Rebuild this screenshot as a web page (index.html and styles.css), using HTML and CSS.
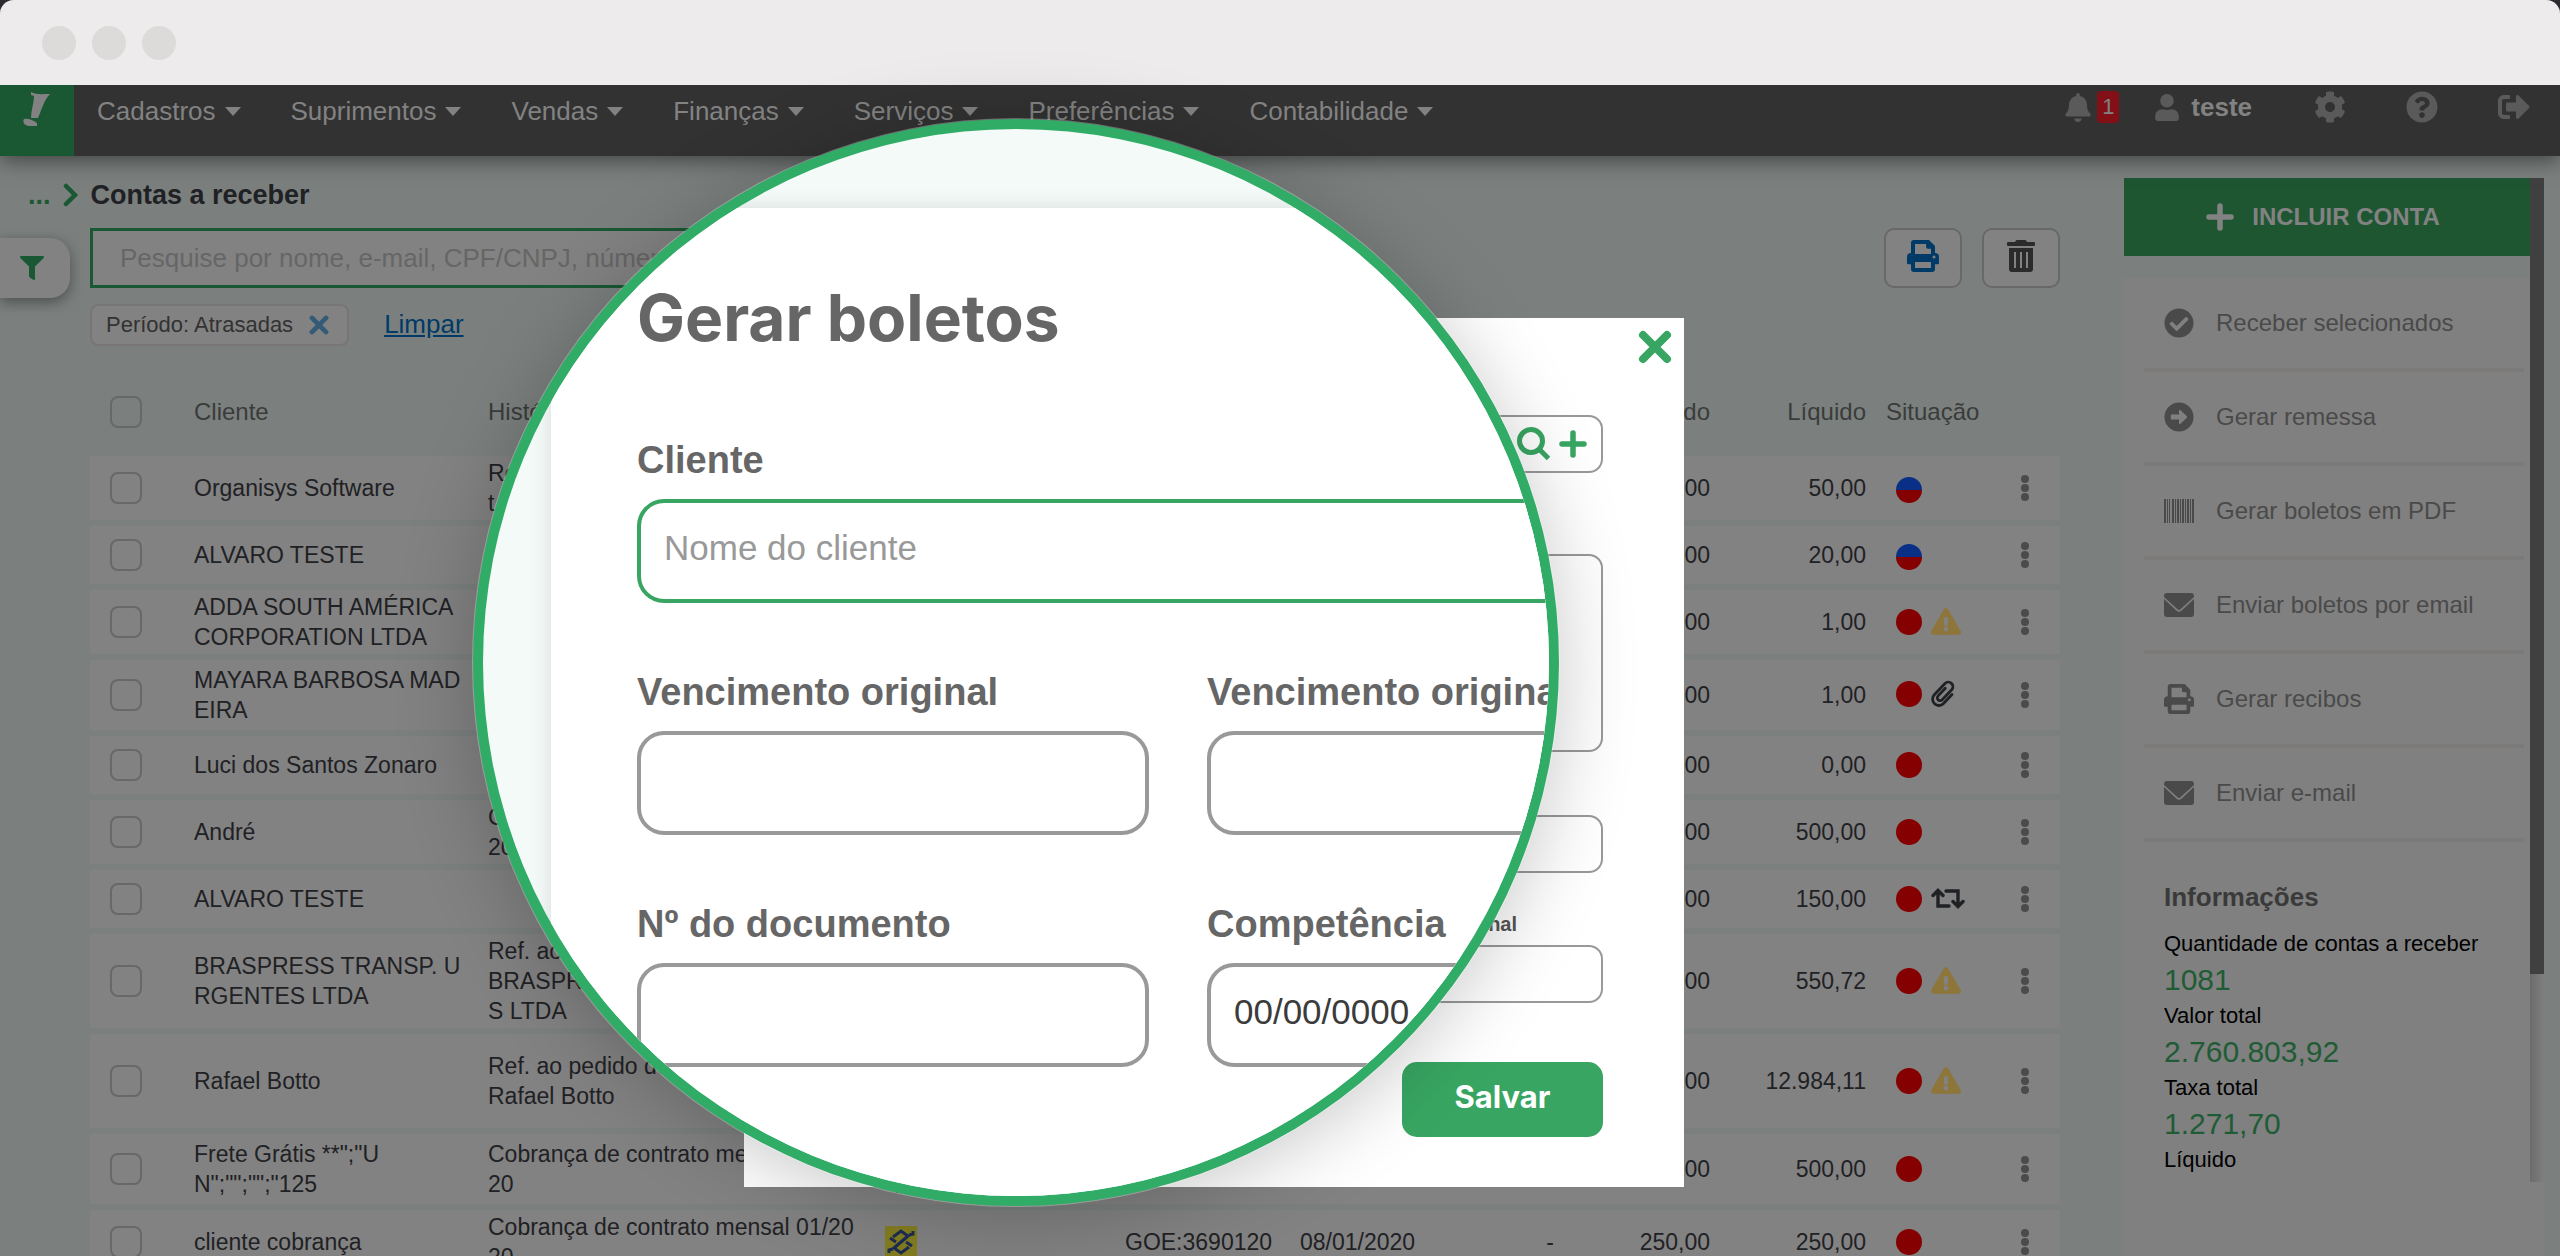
FILE: index.html
```html
<!DOCTYPE html>
<html lang="pt-BR">
<head>
<meta charset="utf-8">
<title>Contas a receber</title>
<link rel="stylesheet" href="styles.css">
</head>
<body>
<svg class="sprite" aria-hidden="true">
  <symbol id="i-filter" viewBox="0 0 512 512"><path d="M488 0H24C2.700 0-8 25.900 7 41l185 185v206c0 7.800 3.800 15.200 10.200 19.700l80 56C298 518.700 320 507.500 320 488V226L505 41C520 25.900 509.300 0 488 0z"/></symbol>
  <symbol id="i-bell" viewBox="0 0 448 512"><path d="M224 512c35.320 0 63.970-28.650 63.970-64H160.030c0 35.350 28.650 64 63.970 64zm215.390-149.710c-19.320-20.760-55.470-51.990-55.470-154.290 0-77.700-54.480-139.900-127.940-155.160V32c0-17.670-14.320-32-31.980-32s-31.980 14.330-31.980 32v20.840C118.560 68.100 64.080 130.300 64.080 208c0 102.300-36.150 133.530-55.470 154.290-6 6.450-8.660 14.160-8.610 21.710.11 16.400 12.980 32 32.100 32h383.800c19.120 0 32-15.600 32.100-32 .05-7.550-2.610-15.270-8.610-21.710z"/></symbol>
  <symbol id="i-user" viewBox="0 0 448 512"><path d="M224 256c70.700 0 128-57.300 128-128S294.700 0 224 0 96 57.300 96 128s57.300 128 128 128zm89.600 32h-16.700c-22.200 10.200-46.900 16-72.900 16s-50.600-5.800-72.900-16h-16.700C60.200 288 0 348.200 0 422.400V464c0 26.500 21.500 48 48 48h352c26.500 0 48-21.500 48-48v-41.600c0-74.200-60.200-134.400-134.400-134.400z"/></symbol>
  <symbol id="i-cog" viewBox="0 0 512 512"><path d="M487.400 315.700l-42.600-24.600c4.300-23.200 4.300-47 0-70.200l42.600-24.600c4.900-2.800 7.100-8.600 5.500-14-11.100-35.600-30-67.800-54.700-94.600-3.800-4.100-10-5.100-14.800-2.300L380.800 110c-17.900-15.400-38.500-27.300-60.800-35.100V25.800c0-5.600-3.900-10.500-9.400-11.700-36.700-8.200-74.300-7.800-109.200 0-5.500 1.200-9.400 6.100-9.400 11.700V75c-22.200 7.900-42.800 19.800-60.800 35.100L88.700 85.500c-4.900-2.800-11-1.900-14.800 2.300-24.700 26.700-43.600 58.900-54.700 94.600-1.700 5.400.6 11.200 5.500 14L67.300 221c-4.300 23.200-4.300 47 0 70.200l-42.600 24.600c-4.900 2.800-7.100 8.600-5.500 14 11.100 35.600 30 67.800 54.700 94.600 3.800 4.100 10 5.100 14.800 2.300l42.600-24.600c17.900 15.400 38.500 27.300 60.800 35.100v49.200c0 5.600 3.900 10.500 9.400 11.700 36.700 8.200 74.300 7.800 109.200 0 5.500-1.200 9.400-6.100 9.400-11.700v-49.200c22.200-7.900 42.800-19.800 60.800-35.100l42.600 24.600c4.900 2.800 11 1.900 14.800-2.300 24.700-26.700 43.600-58.900 54.700-94.600 1.500-5.500-.7-11.300-5.600-14.100zM256 336c-44.100 0-80-35.900-80-80s35.900-80 80-80 80 35.900 80 80-35.900 80-80 80z"/></symbol>
  <symbol id="i-help" viewBox="0 0 512 512"><path d="M504 256c0 136.997-111.043 248-248 248S8 392.997 8 256C8 119.083 119.043 8 256 8s248 111.083 248 248zM262.655 90c-54.497 0-89.255 22.957-116.549 63.758-3.536 5.286-2.353 12.415 2.715 16.258l34.699 26.310c5.205 3.947 12.621 3.008 16.665-2.122 17.864-22.658 30.113-35.797 57.303-35.797 20.429 0 45.698 13.148 45.698 32.958 0 14.976-12.363 22.667-32.534 33.976C247.128 238.528 216 254.941 216 296v4c0 6.627 5.373 12 12 12h56c6.627 0 12-5.373 12-12v-1.333c0-28.462 83.186-29.647 83.186-106.667 0-58.002-60.165-102-116.531-102zM256 338c-25.365 0-46 20.635-46 46 0 25.364 20.635 46 46 46s46-20.636 46-46c0-25.365-20.635-46-46-46z"/></symbol>
  <symbol id="i-exit" viewBox="0 0 512 512"><path d="M497 273L329 441c-15 15-41 4.500-41-17v-96H152c-13.300 0-24-10.700-24-24v-96c0-13.300 10.700-24 24-24h136V88c0-21.400 25.900-32 41-17l168 168c9.300 9.400 9.300 24.600 0 34zM192 436v-40c0-6.600-5.400-12-12-12H96c-17.700 0-32-14.300-32-32V160c0-17.700 14.300-32 32-32h84c6.600 0 12-5.400 12-12V76c0-6.600-5.400-12-12-12H96c-53 0-96 43-96 96v192c0 53 43 96 96 96h84c6.600 0 12-5.400 12-12z"/></symbol>
  <symbol id="i-check" viewBox="0 0 512 512"><path d="M504 256c0 136.967-111.033 248-248 248S8 392.967 8 256 119.033 8 256 8s248 111.033 248 248zM227.314 387.314l184-184c6.248-6.248 6.248-16.379 0-22.627l-22.627-22.627c-6.248-6.249-16.379-6.249-22.628 0L216 308.118l-70.059-70.059c-6.248-6.248-16.379-6.248-22.628 0l-22.627 22.627c-6.248 6.248-6.248 16.379 0 22.627l104 104c6.249 6.249 16.379 6.249 22.628.001z"/></symbol>
  <symbol id="i-arrow" viewBox="0 0 512 512"><path fill-rule="evenodd" d="M256 8a248 248 0 1 1 0 496 248 248 0 0 1 0-496zM128 212c-7 0-12 5-12 12v64c0 7 5 12 12 12h128v62c0 14 16 20 26 11l108-105c7-7 7-17 0-24L282 139c-10-9-26-3-26 11v62z"/></symbol>
  <symbol id="i-barcode" viewBox="0 0 30 24"><path d="M0 0h2v24H0zM3 0h1v24H3zM5 0h1v24H5zM8 0h2v24H8zM11 0h1v24h-1zM13 0h2v24h-2zM16 0h1v24h-1zM18 0h2v24h-2zM21 0h1v24h-1zM23 0h2v24h-2zM26 0h1v24h-1zM28 0h2v24h-2z"/></symbol>
  <symbol id="i-mail" viewBox="0 0 30 24"><path d="M3 0h24a3 3 0 0 1 3 3v1L16.500 16.300a2.200 2.200 0 0 1-3 0L0 4V3a3 3 0 0 1 3-3zM0 6l12.300 11.500a4 4 0 0 0 5.400 0L30 6v15a3 3 0 0 1-3 3H3a3 3 0 0 1-3-3z"/></symbol>
  <symbol id="i-print" viewBox="0 0 512 512"><path fill-rule="evenodd" d="M64 208V48A48 48 0 0 1 112 0h240l96 96v112a64 64 0 0 1 64 64v96a20 20 0 0 1-20 20h-44v76a48 48 0 0 1-48 48H112a48 48 0 0 1-48-48v-76H20a20 20 0 0 1-20-20v-96a64 64 0 0 1 64-64zM128 64v160h256V140h-50a28 28 0 0 1-28-28V64zM128 352v96h256v-96zM432 248a24 24 0 1 0 0 48 24 24 0 0 0 0-48z"/></symbol>
  <symbol id="i-trash" viewBox="0 0 448 512"><path fill-rule="evenodd" d="M16 32h112l12-20a24 24 0 0 1 20-12h128a24 24 0 0 1 20 12l12 20h112a16 16 0 0 1 16 16v32a16 16 0 0 1-16 16H16A16 16 0 0 1 0 80V48a16 16 0 0 1 16-16zM32 128h384v336a48 48 0 0 1-48 48H80a48 48 0 0 1-48-48zM112 192v256h32V192zM208 192v256h32V192zM304 192v256h32V192z"/></symbol>
  <symbol id="i-plus" viewBox="0 0 28 28"><path d="M14 3v22M3 14h22" fill="none" stroke="currentColor" stroke-width="5.500" stroke-linecap="round"/></symbol>
  <symbol id="i-close" viewBox="0 0 34 34"><path d="M5 5l24 24M29 5L5 29" fill="none" stroke="currentColor" stroke-width="8" stroke-linecap="round"/></symbol>
  <symbol id="i-search" viewBox="0 0 34 34"><circle cx="14" cy="14" r="11.500" fill="none" stroke="currentColor" stroke-width="5"/><path d="M23 23l8.500 8.500" fill="none" stroke="currentColor" stroke-width="5"/></symbol>
  <symbol id="i-chevron" viewBox="0 0 16 24"><path d="M3 3l9 9-9 9" fill="none" stroke="currentColor" stroke-width="4.500" stroke-linecap="round"/></symbol>
  <symbol id="i-warn" viewBox="0 0 576 512"><path d="M569.517 440.013C587.975 472.007 564.806 512 527.940 512H48.054c-36.937 0-59.999-40.055-41.577-71.987L246.423 23.985c18.467-32.009 64.720-31.951 83.154 0l239.940 416.028zM288 354c-25.405 0-46 20.595-46 46s20.595 46 46 46 46-20.595 46-46-20.595-46-46-46zm-43.673-165.346l7.418 136c.347 6.364 5.609 11.346 11.982 11.346h48.546c6.373 0 11.635-4.982 11.982-11.346l7.418-136c.375-6.874-5.098-12.654-11.982-12.654h-63.383c-6.884 0-12.356 5.780-11.981 12.654z"/></symbol>
  <symbol id="i-clip" viewBox="0 0 24 28"><path d="M21 14.500l-8.500 9a6.300 6.300 0 0 1-9.200-8.700L14 3.500a4.600 4.600 0 0 1 6.700 6.300l-9.500 10a2.800 2.800 0 0 1-4.100-3.900l7.200-7.600" fill="none" stroke="currentColor" stroke-width="2.800" stroke-linecap="round"/></symbol>
  <symbol id="i-retweet" viewBox="0 0 34 22"><path d="M7 3.500v14.500h11M2 7.500l5-5 5 5M15 3h12v14.500M22 13.500l5 5 5-5" fill="none" stroke="currentColor" stroke-width="3.400" stroke-linecap="round"/></symbol>
  <symbol id="i-dots" viewBox="0 0 8 26"><circle cx="4" cy="4" r="4"/><circle cx="4" cy="13" r="4"/><circle cx="4" cy="22" r="4"/></symbol>
</svg>

<div class="window">
  <div class="chrome"><span class="dot"></span><span class="dot"></span><span class="dot"></span></div>

  <header class="nav">
    <a class="logo" href="#" aria-label="Início"><svg width="28" height="36" viewBox="0 0 28 36"><path fill="#828282" d="M8 0c5 3 12 2 19 2-6 6-8 15-12 24H8c0-8 3-15 3-22L8 3zM1 27c4-1 9 1 13 4l0 3H6C2 34-1 30 1 27z"/></svg></a>
    <nav class="menu">
      <a href="#">Cadastros</a><a href="#">Suprimentos</a><a href="#">Vendas</a><a href="#">Finanças</a><a href="#">Serviços</a><a href="#">Preferências</a><a href="#">Contabilidade</a>
    </nav>
    <div class="tools">
      <a class="bell" href="#" aria-label="Notificações"><svg width="26" height="29"><use href="#i-bell"/></svg><span class="badge">1</span></a>
      <a class="account" href="#"><svg width="24" height="27"><use href="#i-user"/></svg>teste</a>
      <a href="#" aria-label="Configurações"><svg width="32" height="32"><use href="#i-cog"/></svg></a>
      <a href="#" aria-label="Ajuda"><svg width="32" height="32"><use href="#i-help"/></svg></a>
      <a href="#" aria-label="Sair"><svg width="32" height="32"><use href="#i-exit"/></svg></a>
    </div>
  </header>

  <div class="body">
    <button class="filter-tab" aria-label="Filtros"><svg width="24" height="24"><use href="#i-filter"/></svg></button>
    <main class="content">
      <h1 class="crumb"><a href="#">...</a><svg width="16" height="24"><use href="#i-chevron"/></svg>Contas a receber</h1>
      <div class="toolbar">
        <input class="search" type="text" aria-label="Pesquisar" placeholder="Pesquise por nome, e-mail, CPF/CNPJ, número">
        <div class="actions">
          <button class="tool tool-print" aria-label="Imprimir"><svg width="32" height="32"><use href="#i-print"/></svg></button>
          <button class="tool" aria-label="Excluir"><svg width="28" height="32"><use href="#i-trash"/></svg></button>
        </div>
      </div>
      <div class="chips">
        <span class="chip">Período: Atrasadas<button aria-label="Remover"><svg width="20" height="20"><use href="#i-close"/></svg></button></span>
        <a href="#">Limpar</a>
      </div>

      <table class="grid">
        <colgroup><col class="c-check"><col class="c-client"><col><col class="c-bank"><col class="c-doc"><col class="c-date"><col class="c-date"><col class="c-num"><col class="c-num"><col class="c-status"><col class="c-menu"></colgroup>
        <thead><tr><th><input type="checkbox" aria-label="Todos"></th><th>Cliente</th><th>Histórico</th><th></th><th></th><th></th><th></th><th class="num">Saldo</th><th class="num">Líquido</th><th class="th-status">Situação</th><th></th></tr></thead>
        <tbody>
          <tr><td><input type="checkbox" aria-label="Selecionar"></td><td>Organisys Software</td><td>Ref.<br>t</td><td></td><td></td><td></td><td></td><td class="num">50,00</td><td class="num">50,00</td><td class="status"><i class="ball split"></i></td><td><svg width="8" height="26"><use href="#i-dots"/></svg></td></tr>
          <tr><td><input type="checkbox" aria-label="Selecionar"></td><td>ALVARO TESTE</td><td></td><td></td><td></td><td></td><td></td><td class="num">20,00</td><td class="num">20,00</td><td class="status"><i class="ball split"></i></td><td><svg width="8" height="26"><use href="#i-dots"/></svg></td></tr>
          <tr><td><input type="checkbox" aria-label="Selecionar"></td><td>ADDA SOUTH AMÉRICA<br>CORPORATION LTDA</td><td></td><td></td><td></td><td></td><td></td><td class="num">1,00</td><td class="num">1,00</td><td class="status"><i class="ball"></i><svg class="warn" width="30" height="27"><use href="#i-warn"/></svg></td><td><svg width="8" height="26"><use href="#i-dots"/></svg></td></tr>
          <tr class="r-mid"><td><input type="checkbox" aria-label="Selecionar"></td><td>MAYARA BARBOSA MAD<br>EIRA</td><td></td><td></td><td></td><td></td><td></td><td class="num">1,00</td><td class="num">1,00</td><td class="status"><i class="ball"></i><svg width="24" height="28"><use href="#i-clip"/></svg></td><td><svg width="8" height="26"><use href="#i-dots"/></svg></td></tr>
          <tr><td><input type="checkbox" aria-label="Selecionar"></td><td>Luci dos Santos Zonaro</td><td></td><td></td><td></td><td></td><td></td><td class="num">0,00</td><td class="num">0,00</td><td class="status"><i class="ball"></i></td><td><svg width="8" height="26"><use href="#i-dots"/></svg></td></tr>
          <tr><td><input type="checkbox" aria-label="Selecionar"></td><td>André</td><td>Cobrança<br>20</td><td></td><td></td><td></td><td></td><td class="num">500,00</td><td class="num">500,00</td><td class="status"><i class="ball"></i></td><td><svg width="8" height="26"><use href="#i-dots"/></svg></td></tr>
          <tr><td><input type="checkbox" aria-label="Selecionar"></td><td>ALVARO TESTE</td><td></td><td></td><td></td><td></td><td></td><td class="num">150,00</td><td class="num">150,00</td><td class="status"><i class="ball"></i><svg width="34" height="22"><use href="#i-retweet"/></svg></td><td><svg width="8" height="26"><use href="#i-dots"/></svg></td></tr>
          <tr><td><input type="checkbox" aria-label="Selecionar"></td><td>BRASPRESS TRANSP. U<br>RGENTES LTDA</td><td>Ref. ao pedido<br>BRASPRESS<br>S LTDA</td><td></td><td></td><td></td><td></td><td class="num">500,00</td><td class="num">550,72</td><td class="status"><i class="ball"></i><svg class="warn" width="30" height="27"><use href="#i-warn"/></svg></td><td><svg width="8" height="26"><use href="#i-dots"/></svg></td></tr>
          <tr class="r-tall"><td><input type="checkbox" aria-label="Selecionar"></td><td>Rafael Botto</td><td>Ref. ao pedido de<br>Rafael Botto</td><td></td><td></td><td></td><td></td><td class="num">12.000,00</td><td class="num">12.984,11</td><td class="status"><i class="ball"></i><svg class="warn" width="30" height="27"><use href="#i-warn"/></svg></td><td><svg width="8" height="26"><use href="#i-dots"/></svg></td></tr>
          <tr class="r-mid"><td><input type="checkbox" aria-label="Selecionar"></td><td>Frete Grátis **";"U<br>N";"";"";"125</td><td>Cobrança de contrato me<br>20</td><td class="bank">Te</td><td></td><td></td><td></td><td class="num">500,00</td><td class="num">500,00</td><td class="status"><i class="ball"></i></td><td><svg width="8" height="26"><use href="#i-dots"/></svg></td></tr>
          <tr class="r-last"><td><input type="checkbox" aria-label="Selecionar"></td><td>cliente cobrança</td><td>Cobrança de contrato mensal 01/20<br>20</td><td><svg width="32" height="32" viewBox="0 0 32 32"><path fill="#837d21" d="M0 0h32v32H0z"/><path fill="none" stroke="#1d2c52" stroke-width="3" d="M4 27V24l4-1M28 5v3l-4 1M8 11l8-6 7 5-13 11M24 21l-8 6-7-5 13-11M5 12l6 4M27 20l-6-4"/></svg></td><td>GOE:3690120</td><td>08/01/2020</td><td class="num">-</td><td class="num">250,00</td><td class="num">250,00</td><td class="status"><i class="ball"></i></td><td><svg width="8" height="26"><use href="#i-dots"/></svg></td></tr>
        </tbody>
      </table>
    </main>

    <aside class="side">
      <button class="include"><svg width="28" height="28"><use href="#i-plus"/></svg>INCLUIR CONTA</button>
      <div class="panel">
        <ul class="side-list">
          <li><a href="#"><svg width="30" height="30"><use href="#i-check"/></svg>Receber selecionados</a></li>
          <li><a href="#"><svg width="30" height="30"><use href="#i-arrow"/></svg>Gerar remessa</a></li>
          <li><a href="#"><svg width="30" height="24"><use href="#i-barcode"/></svg>Gerar boletos em PDF</a></li>
          <li><a href="#"><svg width="30" height="24"><use href="#i-mail"/></svg>Enviar boletos por email</a></li>
          <li><a href="#"><svg width="30" height="30"><use href="#i-print"/></svg>Gerar recibos</a></li>
          <li><a href="#"><svg width="30" height="24"><use href="#i-mail"/></svg>Enviar e-mail</a></li>
        </ul>
        <h2>Informações</h2>
        <dl>
          <dt>Quantidade de contas a receber</dt><dd>1081</dd>
          <dt>Valor total</dt><dd>2.760.803,92</dd>
          <dt>Taxa total</dt><dd>1.271,70</dd>
          <dt>Líquido</dt>
        </dl>
      </div>
      <div class="scroll"><div class="thumb"></div></div>
    </aside>
  </div>

  <section class="modal" role="dialog" aria-label="Gerar boletos">
    <button class="modal-close" aria-label="Fechar"><svg width="34" height="34"><use href="#i-close"/></svg></button>
    <div class="m-field">
      <label for="m-client">Cliente</label>
      <div class="m-box">
        <input id="m-client" type="text">
        <button aria-label="Buscar"><svg width="34" height="34"><use href="#i-search"/></svg></button>
        <button aria-label="Adicionar"><svg width="28" height="28"><use href="#i-plus"/></svg></button>
      </div>
    </div>
    <div class="m-field m-notes"><label for="m-notes">Histórico</label><textarea id="m-notes"></textarea></div>
    <div class="m-field m-doc"><label for="m-doc">Nº do documento</label><input id="m-doc" class="m-input" type="text"></div>
    <div class="m-field m-due"><label for="m-due">Vencimento original</label><input id="m-due" class="m-input" type="text"></div>
    <button class="save">Salvar</button>
  </section>

  <section class="lens">
    <form class="card">
      <h2>Gerar boletos</h2>
      <div class="fields">
        <div class="field wide"><label for="client">Cliente</label><input id="client" type="text" placeholder="Nome do cliente"></div>
        <div class="field"><label for="due1">Vencimento original</label><input id="due1" type="text"></div>
        <div class="field"><label for="due2">Vencimento original</label><input id="due2" type="text"></div>
        <div class="field"><label for="doc">Nº do documento</label><input id="doc" type="text"></div>
        <div class="field"><label for="comp">Competência</label><input id="comp" type="text" value="00/00/0000"></div>
      </div>
    </form>
  </section>
</div>
</body>
</html>
```
FILE: styles.css
```css
* { box-sizing: border-box; }

body {
  margin: 0;
  background: #2b2b2f;
  font-family: "Liberation Sans", Arial, sans-serif;
  font-size: 23px;
  line-height: 30px;
  color: #1f2124;
}

button, input, textarea { font: inherit; color: inherit; margin: 0; }
button { background: none; border: 0; padding: 0; cursor: pointer; }
a { color: inherit; text-decoration: none; }
svg { display: block; flex: none; fill: currentColor; }
.sprite { position: absolute; width: 0; height: 0; }

.window {
  position: relative;
  display: flex;
  flex-direction: column;
  height: 100vh;
  overflow: hidden;
  border-radius: 14px 14px 0 0;
  background: #7b807e;
}

.chrome {
  flex: none;
  position: relative;
  z-index: 2;
  display: flex;
  align-items: center;
  gap: 16px;
  height: 85px;
  padding-left: 42px;
  background: #edebec;
}
.dot { width: 34px; height: 34px; border-radius: 50%; background: #dcdbd9; }

/* navigation bar */
.nav {
  flex: none;
  position: relative;
  z-index: 1;
  display: flex;
  height: 71px;
  background: #323232;
  color: #828282;
  font-size: 26px;
  line-height: 32px;
  box-shadow: 0 4px 20px rgba(0, 0, 0, .5);
}
.logo { width: 74px; padding: 7px 0 0 23px; background: #1a5834; }
.menu { display: flex; flex: 1; gap: 50px; padding: 10px 0 0 23px; }
.menu a { display: flex; gap: 9px; height: 32px; }
.menu a::after {
  content: "";
  align-self: center;
  border: 8px solid transparent;
  border-top: 9px solid #828282;
  border-bottom: 0;
}
.tools { display: flex; align-items: center; gap: 60px; height: 44px; padding-right: 30px; }
.tools svg { color: #5a5a5a; }
.bell, .account { display: flex; align-items: center; }
.bell { gap: 6px; margin-right: -24px; }
.account { gap: 12px; padding-right: 2px; font-weight: bold; }
.badge {
  width: 22px;
  border-radius: 4px;
  background: #821016;
  font-size: 22px;
  text-align: center;
}

/* list area */
.body { flex: 1; display: flex; position: relative; min-height: 0; }
.filter-tab {
  position: absolute;
  left: 0;
  top: 82px;
  width: 70px;
  height: 60px;
  padding-left: 20px;
  border-radius: 0 20px 20px 0;
  background: #828282;
  color: #1a5834;
  box-shadow: 0 4px 14px rgba(0, 0, 0, .4);
}
.content { flex: 1; min-width: 0; padding: 23px 64px 0 90px; }
.crumb {
  display: flex;
  align-items: center;
  gap: 12px;
  height: 32px;
  margin: 0 0 17px -62px;
  font-size: 27px;
}
.crumb a, .crumb svg { color: #1a5834; }
.crumb a { line-height: 32px; }
.toolbar { display: flex; justify-content: space-between; height: 60px; }
.search {
  width: 1100px;
  padding: 0 27px;
  border: 3px solid #1a5834;
  background: #828282;
  font-size: 26px;
}
.search::placeholder { color: #666; opacity: 1; }
.actions { display: flex; gap: 20px; }
.tool {
  display: flex;
  align-items: center;
  justify-content: center;
  width: 78px;
  padding-bottom: 4px;
  border: 2px solid #686868;
  border-radius: 10px;
  background: #828282;
  color: #2b2b2b;
}
.tool-print { color: #003a66; }
.chips { display: flex; align-items: center; gap: 35px; margin: 16px 0 22px; }
.chip {
  display: flex;
  align-items: center;
  gap: 16px;
  height: 42px;
  padding: 0 18px 0 14px;
  border: 2px solid #777575;
  border-radius: 8px;
  background: #828282;
  color: #323232;
  font-size: 22px;
}
.chip button { color: #335a77; }
.chips a { padding-bottom: 3px; color: #003a66; font-size: 26px; text-decoration: underline; }

.grid {
  width: 100%;
  table-layout: fixed;
  border-collapse: separate;
  border-spacing: 0 6px;
}
.c-check { width: 104px; }
.c-client { width: 294px; }
.c-bank { width: 240px; }
.c-doc { width: 175px; }
.c-date { width: 127px; }
.c-num { width: 156px; }
.c-status { width: 142px; }
.c-menu { width: 52px; }
.grid th { height: 76px; padding: 0; font-size: 24px; font-weight: normal; text-align: left; color: #3a3c3b; }
.grid td { height: 58px; padding: 2px 0; background: #828282; vertical-align: middle; white-space: nowrap; }
.grid .r-mid td { height: 70px; }
.grid .r-tall td { height: 94px; }
.grid td:first-child, .grid th:first-child { padding-left: 20px; }
.grid td:last-child { padding-left: 13px; color: #4b4b4b; }
.grid .num { text-align: right; }
.grid .th-status { padding-left: 20px; }
.grid .bank { padding: 0 0 4px 5px; vertical-align: bottom; }
.grid .status { padding: 0 0 4px 30px; }
.status svg, .ball { display: inline-block; vertical-align: middle; }
.ball { width: 26px; height: 26px; margin-right: 9px; border-radius: 50%; background: #850000; }
.split { margin-top: 8px; background: linear-gradient(#092f87 50%, #850000 50%); }
.warn { color: #8e7539; }
.grid input {
  display: block;
  appearance: none;
  width: 32px;
  height: 32px;
  border: 2px solid #686868;
  border-radius: 8px;
}

/* sidebar */
.side {
  flex: none;
  display: grid;
  grid-template-columns: 406px 14px;
  grid-template-rows: 78px 22px 1fr;
  width: 436px;
  padding: 22px 16px 0 0;
}
.include {
  grid-area: 1 / 1;
  display: flex;
  align-items: center;
  justify-content: center;
  gap: 18px;
  padding-right: 8px;
  background: #1f5632;
  color: #828282;
  font-size: 24px;
  font-weight: bold;
}
.panel { grid-area: 3 / 1 / 4 / 3; background: #808080; }
.side-list { margin: 0 20px; padding: 0; list-style: none; }
.side-list a {
  display: flex;
  align-items: center;
  gap: 22px;
  height: 94px;
  padding-left: 20px;
  border-bottom: 4px solid #7b7a79;
  color: #4a4a4a;
  font-size: 24px;
}
.panel h2 { margin: 40px 0 16px 40px; font-size: 26px; line-height: 30px; color: #3a3a3a; }
.panel dl { margin: 0 0 0 40px; color: #000; }
.panel dt { font-size: 22px; line-height: 32px; }
.panel dd { margin: 0; font-size: 30px; line-height: 40px; color: #1f5c35; }
.scroll {
  grid-area: 1 / 2 / 4 / 3;
  height: 1004px;
  background: linear-gradient(90deg, #6c6c6c, #7e7e7e);
}
.thumb { height: 796px; background: #404040; }

/* dialog behind the magnifier */
.modal {
  position: absolute;
  z-index: 2;
  left: calc(50% - 536px);
  top: 318px;
  display: grid;
  grid-template-columns: 1fr 276px;
  width: 940px;
  padding: 64px 81px 50px;
  background: #fff;
}
.modal-close { position: absolute; top: 12px; right: 12px; color: #38a662; }
.m-field { grid-column: 1 / 3; display: flex; flex-direction: column; gap: 9px; }
.m-field label { font-size: 20px; line-height: 24px; font-weight: bold; color: #555; }
.m-notes { margin-top: 48px; }
.m-doc { margin-top: 30px; }
.m-due { grid-column: 2; margin-top: 39px; }
.m-input, .m-box, .m-field textarea {
  height: 58px;
  padding: 0 16px;
  border: 2px solid #999;
  border-radius: 14px;
  background: none;
}
.m-box { display: flex; align-items: center; gap: 8px; padding-right: 14px; color: #38a662; }
.m-box input { flex: 1; min-width: 0; border: 0; background: none; }
.m-field textarea { height: 198px; resize: none; }
.save {
  grid-column: 2;
  justify-self: end;
  width: 201px;
  height: 75px;
  margin-top: 59px;
  padding-bottom: 5px;
  border-radius: 15px;
  background: #38a662;
  color: #fff;
  font: bold 31px/40px Inter, sans-serif;
}

/* magnifier */
.lens {
  position: absolute;
  z-index: 3;
  left: calc(50% - 807px);
  top: 119px;
  width: 1086px;
  height: 1087px;
  overflow: hidden;
  border: 10px solid #30ac67;
  border-radius: 50%;
  background: #f3faf8;
  box-shadow: 0 0 0 1px rgba(255, 255, 255, .3), 0 10px 80px rgba(0, 0, 0, .22);
}
.card {
  width: 1300px;
  height: 1200px;
  margin: 79px 0 0 68px;
  padding: 74px 0 0 86px;
  background: #fff;
  box-shadow: 0 0 20px rgba(0, 0, 0, .12);
}
.card h2 { margin: 0 0 84px; font: bold 64px/72px Inter, sans-serif; color: #666; }
.fields { display: grid; grid-template-columns: 512px 512px; gap: 67px 58px; }
.wide { grid-column: 1 / 3; }
.field { display: flex; flex-direction: column; gap: 17px; }
.field label { font-size: 38px; line-height: 44px; font-weight: bold; color: #666; }
.field input {
  width: 100%;
  height: 104px;
  padding: 0 23px 6px;
  border: 4px solid #999;
  border-radius: 27px;
  background: #fff;
  color: #3b3b3b;
  font-size: 35px;
}
.wide input { border-color: #38a662; }
.field input::placeholder { color: #999; opacity: 1; }
```
